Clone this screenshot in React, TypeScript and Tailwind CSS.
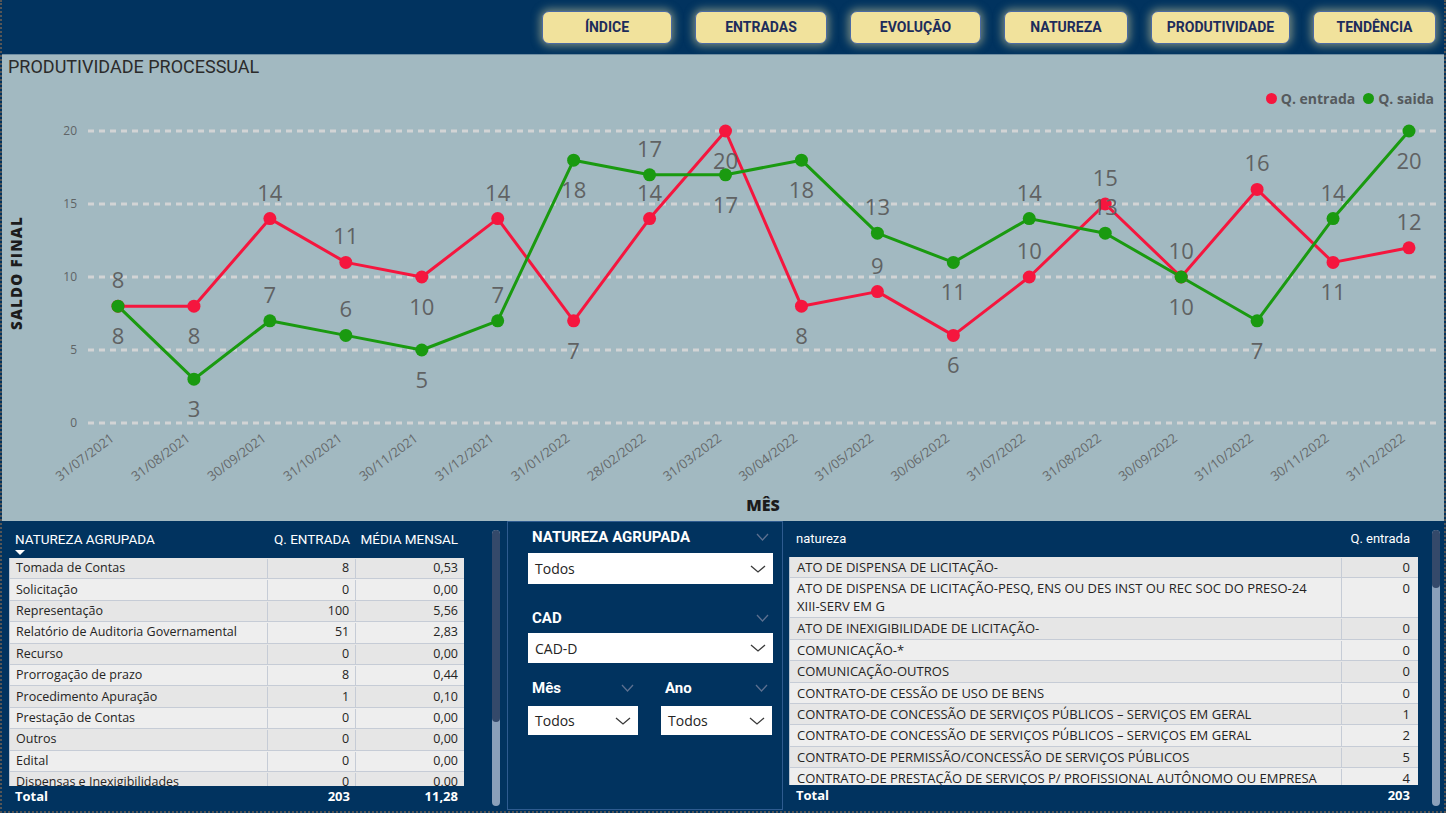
import React from "react";

const red = [8, 8, 14, 11, 10, 14, 7, 14, 20, 8, 9, 6, 10, 15, 10, 16, 11, 12];
const green = [8, 3, 7, 6, 5, 7, 18, 17, 17, 18, 13, 11, 14, 13, 10, 7, 14, 20];
const rPos = ["a", "b", "a", "a", "b", "a", "b", "a", "b", "b", "a", "b", "a", "a", "a", "a", "b", "a"];
const gPos = ["b", "b", "a", "a", "b", "a", "b", "a", "b", "b", "a", "b", "a", "a", "b", "b", "a", "b"];
const dates = [
  "31/07/2021", "31/08/2021", "30/09/2021", "31/10/2021", "30/11/2021", "31/12/2021",
  "31/01/2022", "28/02/2022", "31/03/2022", "30/04/2022", "31/05/2022", "30/06/2022",
  "31/07/2022", "31/08/2022", "30/09/2022", "31/10/2022", "30/11/2022", "31/12/2022",
];
const X = (i: number) => 118 + i * 75.94;
const Y = (v: number) => 423 - v * 14.6;

const RED = "#f5163e";
const GREEN = "#1a9a10";

const buttons = [
  { label: "ÍNDICE", w: "w-[130px]" },
  { label: "ENTRADAS", w: "w-[132px]" },
  { label: "EVOLUÇÃO", w: "w-[131px]" },
  { label: "NATUREZA", w: "w-[124px]" },
  { label: "PRODUTIVIDADE", w: "w-[139px]" },
  { label: "TENDÊNCIA", w: "w-[123px]" },
];

const leftRows = [
  ["Tomada de Contas", "8", "0,53"],
  ["Solicitação", "0", "0,00"],
  ["Representação", "100", "5,56"],
  ["Relatório de Auditoria Governamental", "51", "2,83"],
  ["Recurso", "0", "0,00"],
  ["Prorrogação de prazo", "8", "0,44"],
  ["Procedimento Apuração", "1", "0,10"],
  ["Prestação de Contas", "0", "0,00"],
  ["Outros", "0", "0,00"],
  ["Edital", "0", "0,00"],
  ["Dispensas e Inexigibilidades", "0", "0,00"],
];

const rightRows: [string, string, boolean][] = [
  ["ATO DE DISPENSA DE LICITAÇÃO-", "0", false],
  ["ATO DE DISPENSA DE LICITAÇÃO-PESQ, ENS OU DES INST OU REC SOC DO PRESO-24", "0", true],
  ["ATO DE INEXIGIBILIDADE DE LICITAÇÃO-", "0", false],
  ["COMUNICAÇÃO-*", "0", false],
  ["COMUNICAÇÃO-OUTROS", "0", false],
  ["CONTRATO-DE CESSÃO DE USO DE BENS", "0", false],
  ["CONTRATO-DE CONCESSÃO DE SERVIÇOS PÚBLICOS – SERVIÇOS EM GERAL", "1", false],
  ["CONTRATO-DE CONCESSÃO DE SERVIÇOS PÚBLICOS – SERVIÇOS EM GERAL", "2", false],
  ["CONTRATO-DE PERMISSÃO/CONCESSÃO DE SERVIÇOS PÚBLICOS", "5", false],
  ["CONTRATO-DE PRESTAÇÃO DE SERVIÇOS P/ PROFISSIONAL AUTÔNOMO OU EMPRESA", "4", false],
];

function Chevron({ color, w = 14 }: { color: string; w?: number }) {
  return (
    <svg width={w} height={8} viewBox={`0 0 ${w} 8`} className="shrink-0">
      <path d={`M1 1 L${w / 2} 7 L${w - 1} 1`} stroke={color} strokeWidth={1.3} fill="none" />
    </svg>
  );
}

function Chart() {
  const redPts = red.map((v, i) => `${X(i)},${Y(v)}`).join(" ");
  const greenPts = green.map((v, i) => `${X(i)},${Y(v)}`).join(" ");
  return (
    <svg width={1442} height={408} viewBox="2 113 1442 408" className="block">
      {[0, 5, 10, 15, 20].map((v) => (
        <g key={v}>
          <line x1={88} x2={1436} y1={Y(v)} y2={Y(v)} stroke="#d2d4d5" strokeWidth={3} strokeDasharray="6 5" />
          <text x={77} y={Y(v) + 4} textAnchor="end" fontSize={12} fill="#5f6466" fontFamily="'Open Sans', sans-serif">
            {v}
          </text>
        </g>
      ))}
      <text
        transform="translate(22,273) rotate(-90)"
        textAnchor="middle"
        fontSize={15}
        fontWeight={800}
        fill="#1c1c1c"
        letterSpacing={1.2}
        fontFamily="'Open Sans', sans-serif"
      >
        SALDO FINAL
      </text>
      <polyline points={redPts} fill="none" stroke={RED} strokeWidth={3} strokeLinejoin="round" />
      <polyline points={greenPts} fill="none" stroke={GREEN} strokeWidth={3} strokeLinejoin="round" />
      {red.map((v, i) => (
        <circle key={`r${i}`} cx={X(i)} cy={Y(v)} r={6.5} fill={RED} />
      ))}
      {green.map((v, i) => (
        <circle key={`g${i}`} cx={X(i)} cy={Y(v)} r={6.5} fill={GREEN} />
      ))}
      {red.map((v, i) => (
        <text
          key={`rl${i}`}
          x={X(i)}
          y={rPos[i] === "a" ? Y(v) - 18 : Y(v) + 38}
          textAnchor="middle"
          fontSize={22}
          fill="#606263"
          fontFamily="'Open Sans', sans-serif"
        >
          {v}
        </text>
      ))}
      {green.map((v, i) => (
        <text
          key={`gl${i}`}
          x={X(i)}
          y={gPos[i] === "a" ? Y(v) - 18 : Y(v) + 38}
          textAnchor="middle"
          fontSize={22}
          fill="#606263"
          fontFamily="'Open Sans', sans-serif"
        >
          {v}
        </text>
      ))}
      {dates.map((d, i) => (
        <text
          key={d + i}
          transform={`translate(${X(i) - 3},440) rotate(-37)`}
          textAnchor="end"
          fontSize={13}
          fill="#66696b"
          fontFamily="'Open Sans', sans-serif"
        >
          {d}
        </text>
      ))}
      <text x={763} y={511} textAnchor="middle" fontSize={16} fontWeight={800} fill="#1c1c1c" fontFamily="'Open Sans', sans-serif">
        MÊS
      </text>
    </svg>
  );
}

function SlicerHeader({ label }: { label: string }) {
  return (
    <div className="flex items-center justify-between font-['Roboto',sans-serif] font-bold text-[15px] leading-[16px] text-white pl-[4px] pr-[4px]">
      <span>{label}</span>
      <Chevron color="#5c7090" w={13} />
    </div>
  );
}

function SlicerBox({ value, h }: { value: string; h: string }) {
  return (
    <div className={`${h} bg-white flex items-center justify-between pl-[7px] pr-[7px] text-[14px] text-[#252423]`}>
      <span>{value}</span>
      <Chevron color="#3a3a3a" w={16} />
    </div>
  );
}

export default function App() {
  return (
    <div className="w-[1446px] h-[813px] overflow-hidden border-x-2 border-b-2 border-dotted border-[#555] bg-[#01335f] font-['Open_Sans',sans-serif]">
      {/* Header */}
      <div className="h-[55px] bg-[#01335f] border-b border-[#6f8ea3] flex justify-end items-start pt-[11px] pr-[8px] gap-[23px]">
        {buttons.map((b) => (
          <div
            key={b.label}
            className={`${b.w} h-[33px] rounded-[7px] bg-[#f1e29c] border border-[#4b6aa3] shadow-[0_0_8px_2px_rgba(238,226,160,0.5)] flex items-center justify-center font-['Roboto',sans-serif] font-bold text-[14px] text-[#1d2c5b]`}
          >
            {b.label}
          </div>
        ))}
      </div>

      {/* Chart */}
      <div className="h-[466px] bg-[#a2b9c1] flex flex-col">
        <div className="h-[28px] pl-[6px] pt-[1px] font-['Roboto',sans-serif] text-[18px] leading-[22px] text-[#2b2b2b]">
          PRODUTIVIDADE PROCESSUAL
        </div>
        <div className="h-[30px] flex justify-end items-center pr-[10px] gap-[4px] text-[14px] font-bold text-[#555a5d]">
          <span className="w-[11px] h-[11px] rounded-full bg-[#f5163e]" />
          <span className="mr-[4px]">Q. entrada</span>
          <span className="w-[11px] h-[11px] rounded-full bg-[#1a9a10]" />
          <span>Q. saida</span>
        </div>
        <Chart />
      </div>

      {/* Bottom */}
      <div className="h-[290px] bg-[#01335f] flex">
        {/* Left table */}
        <div className="w-[505px] flex pl-[7px] pt-[1px]">
          <div className="w-[455px] flex flex-col">
            <div className="h-[36px] flex items-start pt-[9px] font-['Roboto',sans-serif] text-[13.5px] leading-[16px] text-white">
              <div className="w-[259px] pl-[6px] flex flex-col">
                <span>NATUREZA AGRUPADA</span>
                <svg width={10} height={5} viewBox="0 0 10 5" className="mt-[3px]">
                  <path d="M0 0 L10 0 L5 5 Z" fill="#ffffff" />
                </svg>
              </div>
              <div className="w-[88px] text-right pr-[6px]">Q. ENTRADA</div>
              <div className="w-[108px] text-right pr-[6px]">MÉDIA MENSAL</div>
            </div>
            <div className="h-[228px] overflow-hidden border-l border-[#b9c3d0] text-[12.5px] text-[#252423]">
              {leftRows.map((r, i) => (
                <div
                  key={r[0]}
                  className={`h-[21.4px] flex items-center border-b border-[#c6ccd6] pt-[1px] ${i % 2 === 0 ? "bg-[#e6e6e6]" : "bg-[#eeeeee]"}`}
                >
                  <div className="w-[259px] h-full flex items-center pl-[6px] border-r border-[#c6ccd6] whitespace-nowrap">{r[0]}</div>
                  <div className="w-[88px] h-full flex items-center justify-end pr-[6px] border-r border-[#c6ccd6]">{r[1]}</div>
                  <div className="w-[108px] h-full flex items-center justify-end pr-[6px]">{r[2]}</div>
                </div>
              ))}
            </div>
            <div className="h-[22px] flex items-center text-[13px] font-bold text-white">
              <div className="w-[259px] pl-[6px]">Total</div>
              <div className="w-[88px] text-right pr-[6px]">203</div>
              <div className="w-[108px] text-right pr-[6px]">11,28</div>
            </div>
          </div>
          <div className="ml-[28px] mt-[8px] w-[8px] h-[276px] rounded-full bg-[#8aa0ba] overflow-hidden">
            <div className="h-[192px] rounded-full bg-[#34496a]" />
          </div>
        </div>

        {/* Middle slicers */}
        <div className="w-[276px] h-[289px] border border-[#2e5b8f] pl-[20px] pr-[9px] flex flex-col">
          <div className="h-[31px] pt-[7px]">
            <SlicerHeader label="NATUREZA AGRUPADA" />
          </div>
          <SlicerBox value="Todos" h="h-[31px]" />
          <div className="h-[49px] flex flex-col justify-end pb-[7px]">
            <SlicerHeader label="CAD" />
          </div>
          <SlicerBox value="CAD-D" h="h-[30px]" />
          <div className="flex gap-[23px]">
            <div className="w-[110px] flex flex-col">
              <div className="h-[43px] flex flex-col justify-end pb-[10px]">
                <SlicerHeader label="Mês" />
              </div>
              <SlicerBox value="Todos" h="h-[29px]" />
            </div>
            <div className="w-[111px] flex flex-col">
              <div className="h-[43px] flex flex-col justify-end pb-[10px]">
                <SlicerHeader label="Ano" />
              </div>
              <SlicerBox value="Todos" h="h-[29px]" />
            </div>
          </div>
        </div>

        {/* Right table */}
        <div className="w-[661px] flex pl-[6px] pt-[1px]">
          <div className="w-[629px] flex flex-col">
            <div className="h-[35px] flex items-start pt-[9px] font-['Roboto',sans-serif] text-[13px] leading-[16px] text-white">
              <div className="w-[553px] pl-[7px]">natureza</div>
              <div className="w-[76px] text-right pr-[8px]">Q. entrada</div>
            </div>
            <div className="h-[228px] overflow-hidden border-l border-[#b9c3d0] text-[13px] text-[#252423]">
              {rightRows.map((r, i) => (
                <div
                  key={i}
                  className={`flex border-b border-[#c6ccd6] ${r[2] ? "h-[40px]" : "h-[21.4px] pt-[1px]"} ${i % 2 === 0 ? "bg-[#e6e6e6]" : "bg-[#eeeeee]"}`}
                >
                  {r[2] ? (
                    <>
                      <div className="w-[553px] pl-[7px] pt-[1px] leading-[18px] border-r border-[#c6ccd6]">
                        {r[0]}
                        <br />
                        XIII-SERV EM G
                      </div>
                      <div className="w-[76px] pr-[8px] pt-[1px] leading-[18px] text-right">{r[1]}</div>
                    </>
                  ) : (
                    <>
                      <div className="w-[553px] pl-[7px] flex items-center border-r border-[#c6ccd6] whitespace-nowrap overflow-hidden">{r[0]}</div>
                      <div className="w-[76px] pr-[8px] flex items-center justify-end">{r[1]}</div>
                    </>
                  )}
                </div>
              ))}
            </div>
            <div className="h-[22px] flex items-center text-[13px] font-bold text-white">
              <div className="w-[553px] pl-[7px]">Total</div>
              <div className="w-[76px] text-right pr-[8px]">203</div>
            </div>
          </div>
          <div className="ml-[14px] mt-[8px] w-[8px] h-[276px] rounded-full bg-[#8aa0ba] overflow-hidden">
            <div className="h-[58px] rounded-full bg-[#34496a]" />
          </div>
        </div>
      </div>
    </div>
  );
}
